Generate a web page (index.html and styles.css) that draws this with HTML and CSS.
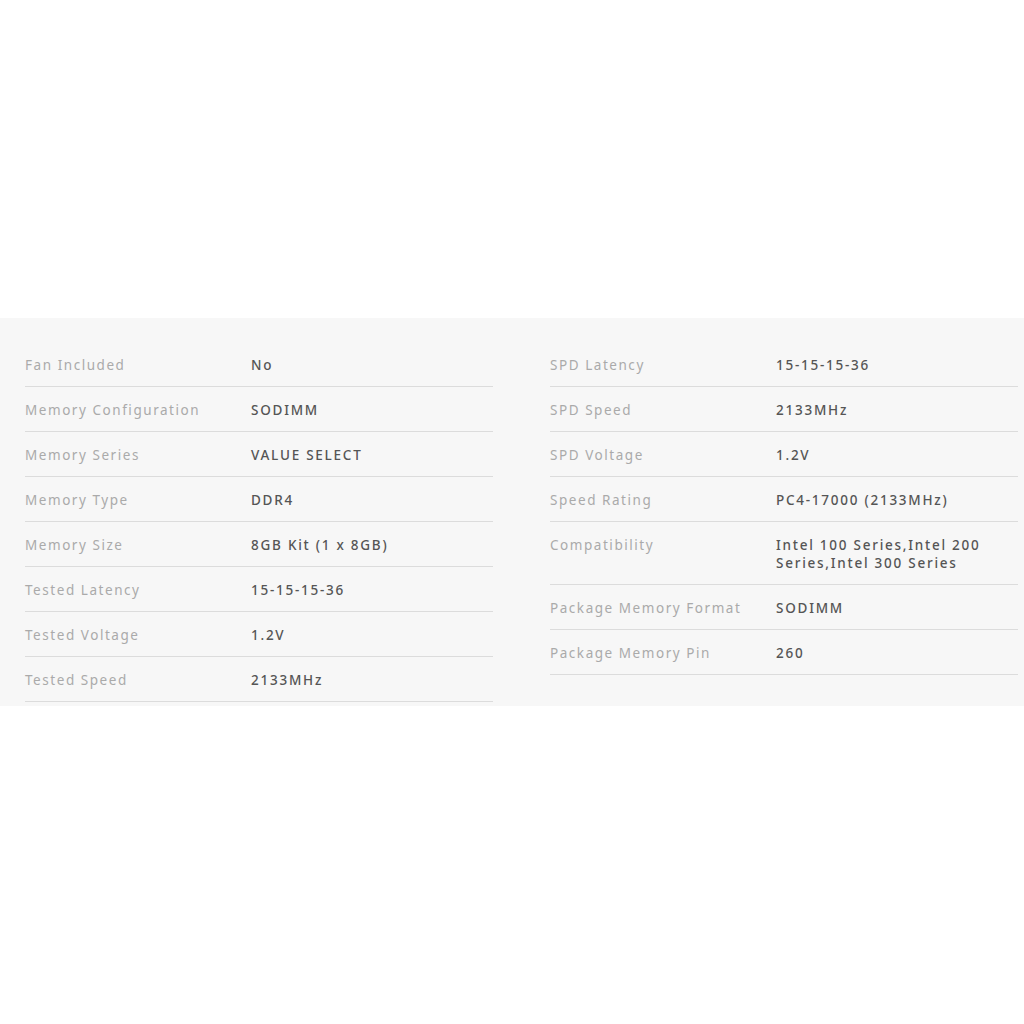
FILE: index.html
```html
<!DOCTYPE html>
<html>
<head>
<meta charset="utf-8">
<link rel="stylesheet" href="styles.css">
</head>
<body>
<section class="specs">
  <div class="col">
    <div class="row"><div class="label">Fan Included</div><div class="value">No</div></div>
    <div class="row"><div class="label">Memory Configuration</div><div class="value">SODIMM</div></div>
    <div class="row"><div class="label">Memory Series</div><div class="value">VALUE SELECT</div></div>
    <div class="row"><div class="label">Memory Type</div><div class="value">DDR4</div></div>
    <div class="row"><div class="label">Memory Size</div><div class="value">8GB Kit (1 x 8GB)</div></div>
    <div class="row"><div class="label">Tested Latency</div><div class="value">15-15-15-36</div></div>
    <div class="row"><div class="label">Tested Voltage</div><div class="value">1.2V</div></div>
    <div class="row"><div class="label">Tested Speed</div><div class="value">2133MHz</div></div>
  </div>
  <div class="col">
    <div class="row"><div class="label">SPD Latency</div><div class="value">15-15-15-36</div></div>
    <div class="row"><div class="label">SPD Speed</div><div class="value">2133MHz</div></div>
    <div class="row"><div class="label">SPD Voltage</div><div class="value">1.2V</div></div>
    <div class="row"><div class="label">Speed Rating</div><div class="value">PC4-17000 (2133MHz)</div></div>
    <div class="row"><div class="label">Compatibility</div><div class="value">Intel 100 Series,Intel 200 Series,Intel 300 Series</div></div>
    <div class="row"><div class="label">Package Memory Format</div><div class="value">SODIMM</div></div>
    <div class="row"><div class="label">Package Memory Pin</div><div class="value">260</div></div>
  </div>
</section>
</body>
</html>
```
FILE: styles.css
```css
html, body {
  margin: 0;
  padding: 0;
  background: #ffffff;
}
body {
  font-family: "Noto Sans", "Liberation Sans", sans-serif;
  padding-top: 318px;
  height: 1024px;
  box-sizing: border-box;
}
.specs {
  background: #f7f7f7;
  display: grid;
  grid-template-columns: 468px 468px;
  column-gap: 57px;
  padding: 24px 6px 4px 25px;
  align-items: start;
}
.row {
  display: flex;
  padding: 14px 0 12px;
  border-bottom: 1px solid #dcdcdc;
  font-size: 13.5px;
  line-height: 18px;
}
.label {
  width: 226px;
  flex: none;
  color: #aaaaaa;
  letter-spacing: 1.55px;
}
.value {
  width: 222px;
  color: #555555;
  font-weight: 500;
  letter-spacing: 1.75px;
}
```
